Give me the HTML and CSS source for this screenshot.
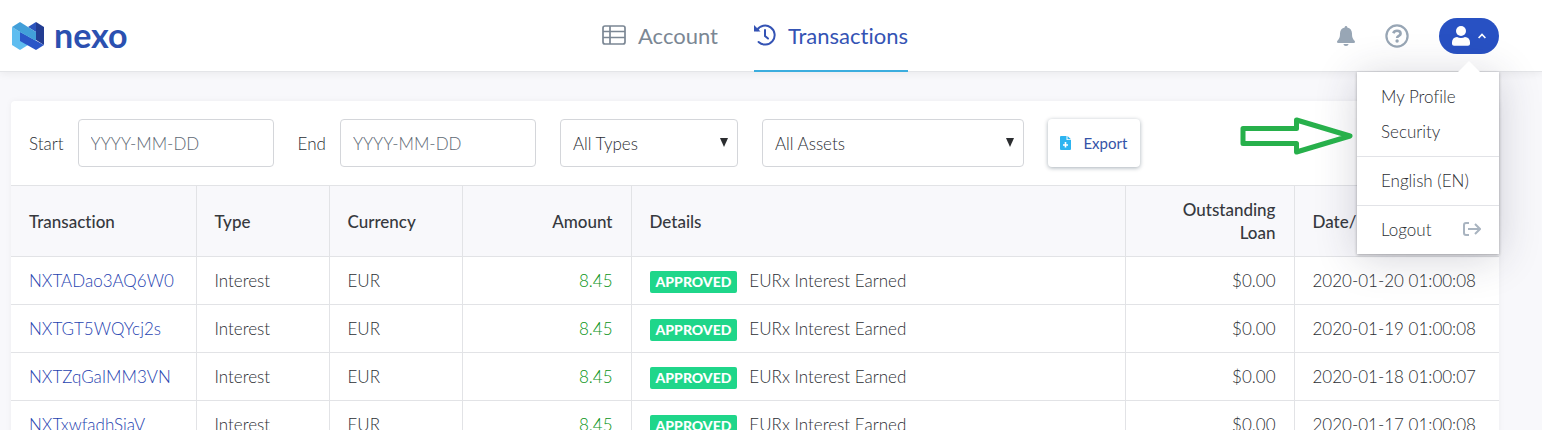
FILE: index.html
```html
<!DOCTYPE html>
<html lang="en">
<head>
  <meta charset="UTF-8" />
  <meta name="viewport" content="width=device-width, initial-scale=1.0" />
  <title>Nexo - Transactions</title>
  <link rel="stylesheet" href="styles.css">
</head>
<body>

  <header class="header">
    <a href="#" class="logo">
      <svg width="34" height="30" viewBox="0 0 34 30" aria-hidden="true">
        <path d="M1 6l8 5v18l-8-5z" fill="#5fbdf0" />
        <path d="M9 11l8 4v9l-8 5z" fill="#5fbdf0" />
        <path d="M17 6l8-5v10z" fill="#2c55bd" />
        <path d="M25 1l8 5v18l-8-5z" fill="#233d92" />
        <path d="M9 11l24 13-8 5-16-9z" fill="#2a56c8" />
        <path d="M1 6l8-5 16 10v9L9 11z" fill="#429fd9" />
      </svg>
      <span class="logo-text">nexo</span>
    </a>

    <nav class="nav">
      <a href="#" class="nav-link">
        <svg width="24" height="20" viewBox="0 0 24 20" fill="none" stroke="currentColor" stroke-width="1.700" aria-hidden="true">
          <rect x="1" y="1" width="22" height="18" rx="2" />
          <path d="M1 6.500h22M1 12.500h22M8 1v18" />
        </svg>
        Account
      </a>
      <a href="#" class="nav-link active">
        <svg width="22" height="22" viewBox="0 0 22 22" fill="none" stroke="currentColor" stroke-width="2" aria-hidden="true">
          <path d="M3 6.200A9.500 9.500 0 1 1 4.600 18" stroke-linecap="round" />
          <path d="M11 6v6l3 2.500" stroke-linecap="round" />
          <path d="M0 1v6.500h6.500z" fill="currentColor" stroke="none" />
        </svg>
        Transactions
      </a>
    </nav>

    <div class="header-right">
      <a href="#" class="icon-link" aria-label="Notifications">
        <svg width="18" height="20" viewBox="0 0 18 20" fill="currentColor" aria-hidden="true">
          <path d="M9 0c.8 0 1.300.6 1.300 1.400C13.300 2 15 4.400 15 7.500c0 4.200 1 5.500 2.600 7.300.8.900.2 2.200-1 2.200H1.400c-1.200 0-1.800-1.300-1-2.200C2 13 3 11.700 3 7.500 3 4.400 4.700 2 7.700 1.400 7.700.6 8.200 0 9 0zM6.500 18h5c0 1.200-1.100 2-2.500 2s-2.500-.8-2.500-2z" />
        </svg>
      </a>
      <a href="#" class="icon-link" aria-label="Help">
        <svg width="24" height="24" viewBox="0 0 24 24" fill="none" stroke="currentColor" aria-hidden="true">
          <circle cx="12" cy="12" r="10.600" stroke-width="2.200" />
          <path d="M8.300 9.200C8.900 7.600 10.200 6.800 12 6.800c2 0 3.600 1.100 3.600 2.900 0 2.200-3.500 2.300-3.500 4.300" stroke-width="2.600" />
          <circle cx="12.100" cy="17" r="1.700" fill="currentColor" stroke="none" />
        </svg>
      </a>
      <div class="profile">
        <button type="button" class="profile-btn" aria-label="Profile" aria-expanded="true">
          <svg width="18" height="20" viewBox="0 0 18 20" fill="currentColor" aria-hidden="true">
            <circle cx="9" cy="5" r="5" />
            <path d="M5 11c1.200.6 2.500 1 4 1s2.800-.4 4-1c3 .2 5 2.300 5 5.200v1.600c0 1.200-.9 2-2 2H2c-1.100 0-2-.8-2-2v-1.600C0 13.300 2 11.200 5 11z" />
          </svg>
          <svg width="8" height="6" viewBox="0 0 8 6" fill="none" stroke="currentColor" stroke-width="1.600" aria-hidden="true">
            <path d="M.6 5 4 1.500 7.400 5" />
          </svg>
        </button>

        <div class="menu">
          <svg class="pointer" width="113" height="38" viewBox="0 0 113 38" fill="none" stroke="#27b04b" stroke-width="5" stroke-linejoin="round" aria-hidden="true">
            <path d="M3 11.500h53.500V3L110 19 56.500 35v-8.500H3z" />
          </svg>
          <div class="menu-group">
            <a href="#">My Profile</a>
            <a href="#">Security</a>
          </div>
          <div class="menu-group">
            <a href="#">English (EN)</a>
          </div>
          <div class="menu-group">
            <a href="#">Logout
              <svg width="18" height="14" viewBox="0 0 18 14" fill="none" stroke="#a9b4c0" stroke-width="2" aria-hidden="true">
                <path d="M6 1H3a2 2 0 0 0-2 2v8a2 2 0 0 0 2 2h3M5 7h12M12 2l5 5-5 5" />
              </svg>
            </a>
          </div>
        </div>
      </div>
    </div>
  </header>

  <main class="card">
    <form class="filters">
      <label for="start">Start</label>
      <input type="text" id="start" placeholder="YYYY-MM-DD" />
      <label for="end">End</label>
      <input type="text" id="end" placeholder="YYYY-MM-DD" />
      <div class="select types">
        <select aria-label="Type"><option>All Types</option></select>
      </div>
      <div class="select assets">
        <select aria-label="Asset"><option>All Assets</option></select>
      </div>
      <button type="button" class="export">
        <svg width="11" height="14" viewBox="0 0 11 14" aria-hidden="true">
          <path d="M1 0h5.500v4H11v9a1 1 0 0 1-1 1H1a1 1 0 0 1-1-1V1a1 1 0 0 1 1-1zM7.500 0 11 3.200H7.500z" fill="#2db4f0" />
          <path d="M5.500 6v5.500M3 9h5" stroke="#fff" stroke-width="1.600" />
        </svg>
        Export
      </button>
    </form>

    <table class="transactions">
      <colgroup>
        <col class="col-id" />
        <col class="col-small" />
        <col class="col-small" />
        <col class="col-amount" />
        <col />
        <col class="col-amount" />
        <col class="col-date" />
      </colgroup>
      <thead>
        <tr>
          <th>Transaction</th>
          <th>Type</th>
          <th>Currency</th>
          <th class="right">Amount</th>
          <th>Details</th>
          <th class="right">Outstanding Loan</th>
          <th>Date/</th>
        </tr>
      </thead>
      <tbody>
        <tr>
          <td><a href="#">NXTADao3AQ6W0</a></td>
          <td>Interest</td>
          <td>EUR</td>
          <td class="right amount">8.45</td>
          <td><span class="badge">APPROVED</span>EURx Interest Earned</td>
          <td class="right">$0.00</td>
          <td>2020-01-20 01:00:08</td>
        </tr>
        <tr>
          <td><a href="#">NXTGT5WQYcj2s</a></td>
          <td>Interest</td>
          <td>EUR</td>
          <td class="right amount">8.45</td>
          <td><span class="badge">APPROVED</span>EURx Interest Earned</td>
          <td class="right">$0.00</td>
          <td>2020-01-19 01:00:08</td>
        </tr>
        <tr>
          <td><a href="#">NXTZqGaIMM3VN</a></td>
          <td>Interest</td>
          <td>EUR</td>
          <td class="right amount">8.45</td>
          <td><span class="badge">APPROVED</span>EURx Interest Earned</td>
          <td class="right">$0.00</td>
          <td>2020-01-18 01:00:07</td>
        </tr>
        <tr>
          <td><a href="#">NXTxwfadhSiaV</a></td>
          <td>Interest</td>
          <td>EUR</td>
          <td class="right amount">8.45</td>
          <td><span class="badge">APPROVED</span>EURx Interest Earned</td>
          <td class="right">$0.00</td>
          <td>2020-01-17 01:00:08</td>
        </tr>
      </tbody>
    </table>
  </main>

</body>
</html>
```
FILE: styles.css
```css
* {
  box-sizing: border-box;
}
body {
  margin: 0;
  font-family: Lato, sans-serif;
  font-size: 17px;
  font-weight: 300;
  font-variant-ligatures: none;
  line-height: 23px;
  color: #2b2e33;
  background: #f8f8fb;
}
a {
  color: inherit;
  text-decoration: none;
}
svg {
  display: block;
  flex: none;
}
input, select, button {
  font-family: inherit;
  font-size: 17px;
  font-weight: 300;
  color: inherit;
}

/* header */
.header {
  position: relative;
  z-index: 1;
  display: grid;
  grid-template-columns: 1fr auto 1fr;
  height: 72px;
  padding: 0 43px 0 11px;
  background: #fff;
  border-bottom: 1px solid #e4e5e8;
  box-shadow: 0 2px 8px rgba(0, 0, 0, 0.06);
}
.logo {
  display: flex;
  align-items: center;
  gap: 9px;
  color: #2b50b0;
}
.logo-text {
  font-size: 34px;
  font-weight: 700;
  line-height: 34px;
  padding-bottom: 2px;
}
.nav {
  display: flex;
  gap: 36px;
  margin-bottom: -1px;
}
.nav-link {
  display: flex;
  align-items: center;
  gap: 12px;
  font-size: 22px;
  font-weight: 400;
  color: #7b8794;
  border-bottom: 2px solid transparent;
}
.nav-link.active {
  color: #3453b4;
  border-color: #3badde;
}
.header-right {
  display: flex;
  justify-content: flex-end;
  align-items: center;
  gap: 30px;
}
.icon-link {
  color: #98a6b5;
}
.profile {
  position: relative;
}
.profile-btn {
  display: flex;
  align-items: center;
  justify-content: center;
  gap: 8px;
  width: 60px;
  height: 36px;
  padding: 0;
  border: none;
  border-radius: 18px;
  background: #2851c3;
  color: #fff;
  cursor: pointer;
}

/* profile menu */
.menu {
  position: absolute;
  top: 54px;
  right: 0;
  width: 142px;
  background: #fff;
  box-shadow: 0 1px 3px rgba(0, 0, 0, 0.3), 0 4px 40px rgba(40, 40, 70, 0.2);
}
.menu::before {
  content: "";
  position: absolute;
  top: -11px;
  right: 19px;
  border: solid transparent;
  border-width: 0 11px 11px;
  border-bottom-color: #fff;
}
.menu-group {
  padding: 6px 0 7px;
}
.menu-group + .menu-group {
  border-top: 1px solid #e2e3e7;
}
.menu-group:nth-of-type(1) {
  padding-top: 7px;
}
.menu-group a {
  display: flex;
  justify-content: space-between;
  align-items: center;
  padding: 6px 18px 6px 24px;
}
.pointer {
  position: absolute;
  top: 45px;
  right: 100%;
  margin-right: 4px;
}

/* filters */
.card {
  margin: 29px 43px 0 11px;
  background: #fff;
  border-radius: 4px;
  box-shadow: 0 0 6px rgba(0, 0, 0, 0.05);
}
.filters {
  display: flex;
  align-items: center;
  padding: 18px;
}
.filters label {
  margin-right: 14px;
}
.filters input,
.select select {
  height: 48px;
  padding: 0 12px;
  border: 1px solid #d4d6da;
  border-radius: 4px;
  background: #fff;
}
.filters input {
  width: 196px;
  margin-right: 24px;
}
.filters input::placeholder {
  color: #5d6873;
}
.select {
  position: relative;
  margin-right: 24px;
}
.select select {
  width: 100%;
  appearance: none;
}
.select::after {
  content: "";
  position: absolute;
  top: 19px;
  right: 10px;
  border: solid transparent;
  border-width: 9px 4px 0;
  border-top-color: #2b2d30;
  pointer-events: none;
}
.types {
  width: 178px;
}
.assets {
  width: 262px;
}
.export {
  display: flex;
  align-items: center;
  justify-content: center;
  gap: 12px;
  width: 92px;
  height: 48px;
  padding: 0;
  font-size: 15px;
  font-weight: 400;
  color: #3453a8;
  background: #fff;
  border: none;
  border-radius: 4px;
  box-shadow: 0 1px 4px rgba(0, 30, 50, 0.35);
  cursor: pointer;
}

/* table */
.transactions {
  width: 100%;
  table-layout: fixed;
  border-collapse: collapse;
}
.col-id {
  width: 185px;
}
.col-small {
  width: 133px;
}
.col-amount {
  width: 169px;
}
.col-date {
  width: 205px;
}
.transactions th,
.transactions td {
  height: 48px;
  padding: 0 18px;
  text-align: left;
  border-top: 1px solid #e2e3e6;
  border-left: 1px solid #e2e3e6;
  white-space: nowrap;
}
.transactions th:first-child,
.transactions td:first-child {
  border-left: none;
}
.transactions th {
  height: 71px;
  font-weight: 500;
  color: #36393e;
  background: #f8f8fb;
  white-space: normal;
}
.transactions .right {
  text-align: right;
}
.transactions a {
  color: #1f43b0;
}
.transactions .amount {
  color: #079416;
}
.badge {
  display: inline-block;
  margin-right: 12px;
  padding: 0 6px;
  font-size: 14px;
  font-weight: 900;
  line-height: 22px;
  color: #fff;
  background: #1fd68a;
  border-radius: 2px;
}
```
